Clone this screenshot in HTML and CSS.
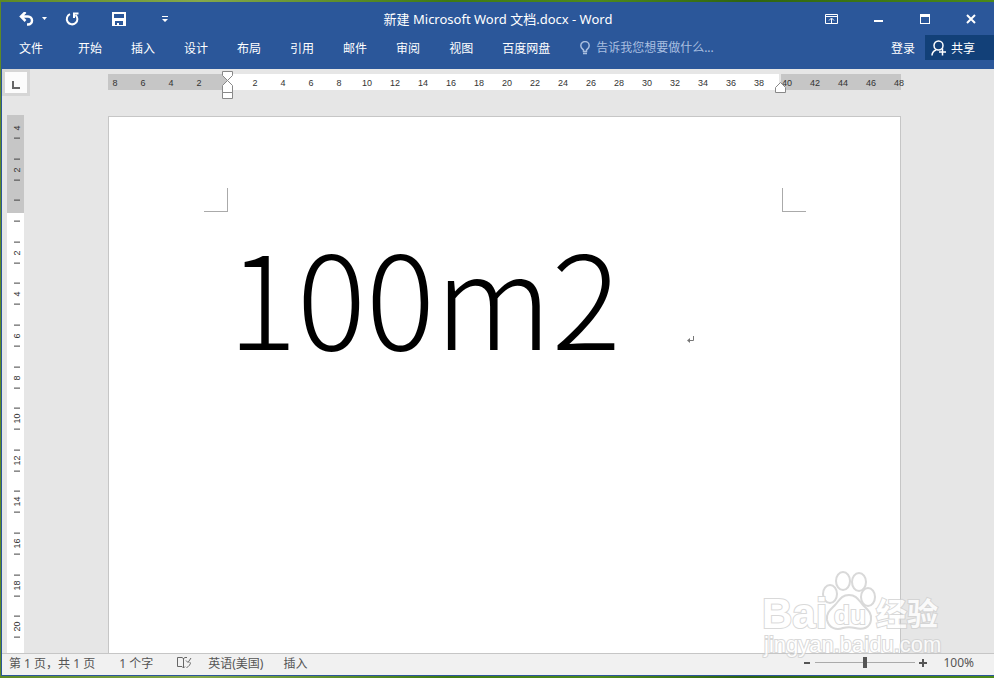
FILE: index.html
```html
<!DOCTYPE html>
<html lang="zh-CN">
<head>
    <meta charset="UTF-8" />
    <title>新建 Microsoft Word 文档.docx - Word</title>
    <link rel="stylesheet" href="styles.css">
</head>
<body>
    <div class="window">
        <header class="ribbon">
            <div class="title-bar">
                <div class="quick-access">
                    <button class="icon-button undo" aria-label="撤消">
                        <svg width="28" height="14" viewBox="0 0 28 14"><path d="M6.500 0 2 4.500 6.500 9M2 4.500h7a4 4 0 0 1 0 8H8" fill="none" stroke="#fff" stroke-width="2.500"/><path d="M23 5h5l-2.500 3z" fill="#fff"/></svg>
                    </button>
                    <button class="icon-button redo" aria-label="重复">
                        <svg width="14" height="14" viewBox="0 0 14 14"><path d="M5 2.200A5.300 5.300 0 1 0 10.500 3" fill="none" stroke="#fff" stroke-width="2"/><path d="M13.500 1.500H9V6" fill="none" stroke="#fff" stroke-width="2"/></svg>
                    </button>
                    <button class="icon-button save" aria-label="保存">
                        <svg width="14" height="14" viewBox="0 0 14 14"><path fill="#fff" fill-rule="evenodd" d="M0 0h14v14H0zM2 2v4h10V2zM3 9v4h2v-2h2v2h4V9z"/></svg>
                    </button>
                    <button class="icon-button" aria-label="自定义快速访问工具栏">
                        <svg width="6" height="6" viewBox="0 0 6 6"><path d="M0 0h6v1H0zM0 3h6L3 6z" fill="#fff"/></svg>
                    </button>
                </div>
                <h1 class="title">新建 Microsoft Word 文档.docx - Word</h1>
                <div class="window-buttons">
                    <button class="icon-button" aria-label="功能区显示选项">
                        <svg width="13" height="10" viewBox="0 0 13 10"><path d="M.5.500h12v9H.5zM1 2.500h11M6.500 9V4.500M4 6.500 6.500 4 9 6.500" fill="none" stroke="#fff"/></svg>
                    </button>
                    <button class="icon-button" aria-label="最小化">
                        <svg width="10" height="12" viewBox="0 0 10 12"><path d="M0 7h9v2H0z" fill="#fff"/></svg>
                    </button>
                    <button class="icon-button" aria-label="最大化">
                        <svg width="10" height="10" viewBox="0 0 10 10"><path fill="#fff" fill-rule="evenodd" d="M0 0h10v10H0zM1 3v6h8V3z"/></svg>
                    </button>
                    <button class="icon-button" aria-label="关闭">
                        <svg width="10" height="10" viewBox="0 0 10 10"><path d="m1 1 8 8M9 1 1 9" stroke="#fff" stroke-width="2"/></svg>
                    </button>
                </div>
            </div>
            <div class="menu-bar">
                <nav class="tabs">
                    <button class="tab file">文件</button>
                    <button class="tab">开始</button>
                    <button class="tab">插入</button>
                    <button class="tab">设计</button>
                    <button class="tab">布局</button>
                    <button class="tab">引用</button>
                    <button class="tab">邮件</button>
                    <button class="tab">审阅</button>
                    <button class="tab">视图</button>
                    <button class="tab">百度网盘</button>
                </nav>
                <label class="tell-me">
                    <svg width="10" height="14" viewBox="0 0 10 14"><path d="M3.500 10.500V9C2.500 8 .8 7 .8 4.800a4.200 4.200 0 0 1 8.400 0C9.200 7 7.500 8 6.500 9v1.500zM3 12.500h4" fill="none" stroke="#a9bfe0" stroke-width="1.500"/></svg>
                    <input type="text" placeholder="告诉我您想要做什么..." aria-label="告诉我您想要做什么">
                </label>
                <button class="sign-in">登录</button>
                <button class="share">
                    <svg width="16" height="16" viewBox="0 0 16 16"><circle cx="7.500" cy="5.500" r="4.500" fill="none" stroke="#fff" stroke-width="1.500"/><path d="M1 15.500c0-3 1.500-4.500 4-5.500M8 12h7M11.500 8.500v7" fill="none" stroke="#fff" stroke-width="1.500"/></svg>
                    共享
                </button>
            </div>
        </header>

        <main class="workspace">
            <button class="tab-stop" aria-label="左对齐式制表符">
                <svg width="8" height="8" viewBox="0 0 8 8"><path d="M1 0v7h7" fill="none" stroke="#666" stroke-width="2"/></svg>
            </button>
            <div class="ruler-row">
                <div class="ruler">
                    <div class="ruler-numbers">
                        <span>8</span><span>6</span><span>4</span><span>2</span><span></span>
                        <span>2</span><span>4</span><span>6</span><span>8</span><span>10</span>
                        <span>12</span><span>14</span><span>16</span><span>18</span><span>20</span>
                        <span>22</span><span>24</span><span>26</span><span>28</span><span>30</span>
                        <span>32</span><span>34</span><span>36</span><span>38</span><span>40</span>
                        <span>42</span><span>44</span><span>46</span><span>48</span>
                    </div>
                    <svg class="indent-left" width="11" height="28" viewBox="0 0 11 28"><path d="M.5.500h10v4l-5 5-5-5zM.5 21.500v-7l5-5 5 5v7zM.5 21.500h10v6H.5z" fill="#fff" stroke="#888"/></svg>
                    <svg class="indent-right" width="11" height="11" viewBox="0 0 11 11"><path d="M.5 10.500v-5l5-5 5 5v5z" fill="#fff" stroke="#888"/></svg>
                </div>
            </div>
            <div class="side-ruler">
                <div class="side-numbers">
                    <span>4</span><span>2</span><span></span><span>2</span><span>4</span>
                    <span>6</span><span>8</span><span>10</span><span>12</span><span>14</span>
                    <span>16</span><span>18</span><span>20</span>
                </div>
            </div>
            <div class="stage">
                <article class="page">
                    <div class="crop-marks"><i class="crop-left"></i><i class="crop-right"></i></div>
                    <p class="paragraph">100m2<svg class="return" width="8" height="8" viewBox="0 0 8 8"><path d="M6.500 0v4.500H2" fill="none" stroke="#777"/><path d="M0 4.500 3 2v5z" fill="#777"/></svg></p>
                </article>
            </div>
        </main>

        <footer class="status-bar">
            <span class="page-count">第 1 页，共 1 页</span>
            <span class="word-count">1 个字</span>
            <button class="proofing" aria-label="校对">
                <svg width="15" height="13" viewBox="0 0 15 13"><path d="M.5 1.500H5l1.500 1 1.500-1h2M.5 1.500v9H5l1.500 1.500v-10M6.500 12 8 10.500M9 4.500l2 2 3-4.500M12.500 6c1.500 1 1 2.500-.5 3.500L9.500 12" fill="none" stroke="#666"/></svg>
            </button>
            <button class="language">英语(美国)</button>
            <button class="insert-mode">插入</button>
            <div class="zoom">
                <button class="zoom-step" aria-label="缩小"><svg width="8" height="8" viewBox="0 0 8 8"><path d="M1 3h6v2H1z" fill="#555"/></svg></button>
                <input class="zoom-range" type="range" min="0" max="200" value="100" aria-label="显示比例">
                <button class="zoom-step" aria-label="放大"><svg width="8" height="8" viewBox="0 0 8 8"><path d="M0 3h3V0h2v3h3v2H5v3H3V5H0z" fill="#555"/></svg></button>
                <button class="zoom-value">100%</button>
            </div>
        </footer>

        <svg class="watermark" width="184" height="88" viewBox="0 0 184 88">
            <g fill="#fff" stroke="#d0d0d0" stroke-width="2" opacity="0.8">
                <ellipse cx="70" cy="23" rx="7" ry="9"/>
                <ellipse cx="83" cy="10" rx="7" ry="9"/>
                <ellipse cx="99" cy="11" rx="7" ry="9"/>
                <ellipse cx="108" cy="26" rx="7" ry="9"/>
                <path d="M89 24c-8 0-10 6-14 10-5 5-9 8-8 15 2 9 10 10 16 8 4-1 8-1 12 0 8 2 15 0 16-8 1-7-3-10-8-15-4-4-6-10-14-10z"/>
                <text class="mark-bai" x="2" y="57">Bai</text>
                <text class="mark-du" x="74" y="53">du</text>
                <text class="mark-cn" x="116" y="54">经验</text>
                <text class="mark-url" x="4" y="81">jingyan.baidu.com</text>
            </g>
        </svg>
    </div>
</body>
</html>
```
FILE: styles.css
```css
* {
    box-sizing: border-box;
}

body {
    margin: 0;
    height: 100vh;
    padding: 2px 0 2px 1px;
    background: linear-gradient(90deg, #5d8a25, #86a94a 20%, #3f7a12 45%, #4f8a1c 60%, #2f6410 75%, #4c8a18);
    font-family: "Noto Sans", "Noto Sans CJK SC", sans-serif;
    font-size: 12px;
    color: #444;
}

button {
    padding: 0;
    border: none;
    background: none;
    color: inherit;
    font: inherit;
}

svg {
    display: block;
}

.window {
    position: relative;
    display: flex;
    flex-direction: column;
    height: 100%;
    border-left: 1px solid #2b579a;
    border-bottom: 1px solid #2b579a;
    background-color: #e6e6e6;
}

/* title bar and tabs */
.ribbon {
    height: 67px;
    background-color: #2b579a;
    color: white;
}

.title-bar {
    display: grid;
    grid-template-columns: 1fr auto 1fr;
    align-items: center;
    height: 33px;
}

.quick-access {
    display: flex;
    align-items: center;
    padding-left: 17px;
}

.undo {
    margin-right: 18px;
}

.redo {
    margin-right: 33px;
}

.save {
    margin-right: 36px;
}

.title {
    margin: 0;
    font-size: 13px;
    font-weight: normal;
}

.window-buttons {
    display: flex;
    align-items: center;
    justify-content: flex-end;
    gap: 36px;
    padding-right: 18px;
}

.menu-bar {
    display: flex;
    align-items: center;
    height: 25px;
}

.tabs {
    display: flex;
    gap: 29px;
    padding-left: 17px;
}

.file {
    margin-right: 6px;
}

.tell-me {
    display: flex;
    align-items: center;
    gap: 6px;
    flex: 1;
    padding-left: 30px;
}

.tell-me input {
    width: 160px;
    padding: 0;
    border: none;
    background: none;
    font: inherit;
    color: white;
}

.tell-me input::placeholder {
    color: #a9bfe0;
}

.sign-in {
    margin-right: 10px;
}

.share {
    display: flex;
    align-items: center;
    gap: 4px;
    width: 69px;
    height: 25px;
    padding-left: 6px;
    background-color: #124078;
}

/* rulers and page */
.workspace {
    display: grid;
    grid-template-columns: 24px 1fr;
    grid-template-rows: 46px 1fr;
    flex: 1;
    min-height: 0;
    overflow: hidden;
}

.tab-stop {
    display: flex;
    align-items: flex-end;
    justify-content: center;
    width: 28px;
    height: 27px;
    padding-bottom: 4px;
    border: 3px solid #d6d6d6;
    background-color: #fcfcfc;
}

.ruler-row {
    display: flex;
    justify-content: center;
    padding: 5px 11px 0 0;
}

.ruler {
    position: relative;
    width: 793px;
    height: 16px;
    background: linear-gradient(90deg, #c6c6c6 120px, white 120px, white 671px, #e6e6e6 671px, #e6e6e6 673px, #c6c6c6 673px);
}

.ruler-numbers {
    display: flex;
    margin-left: -7px;
}

.ruler-numbers span {
    flex: none;
    width: 28px;
    line-height: 18px;
    text-align: center;
}

.ruler-numbers,
.side-numbers {
    font-family: "Liberation Sans", Arial, sans-serif;
    font-size: 9px;
    color: #333;
}

.indent-left,
.indent-right {
    position: absolute;
    left: 114px;
    top: -3px;
}

.indent-right {
    left: 667px;
    top: 8px;
}

.side-ruler {
    width: 17px;
    margin-left: 5px;
    overflow: hidden;
    background: linear-gradient(#c6c6c6 98px, white 98px);
}

.side-numbers {
    display: flex;
    flex-direction: column;
    height: 541px;
    margin-top: -8px;
}

.side-numbers span {
    display: flex;
    flex: 1;
    align-items: center;
    justify-content: space-between;
    padding: 10px 5px 10px 2px;
    writing-mode: vertical-rl;
    transform: rotate(180deg);
}

.side-numbers span::before,
.side-numbers span::after {
    content: "";
    width: 6px;
    height: 1px;
    background-color: #444;
}

.side-numbers span:first-child::after {
    background: none;
}

.stage {
    display: flex;
    justify-content: center;
    padding: 1px 11px 0 0;
}

.page {
    width: 793px;
    padding: 71px 94px 0 95px;
    border: 1px solid #c6c6c6;
    border-bottom: none;
    background-color: white;
}

.crop-marks {
    display: flex;
    justify-content: space-between;
}

.crop-left,
.crop-right {
    width: 24px;
    height: 24px;
    border-bottom: 1px solid #aaa;
}

.crop-left {
    border-right: 1px solid #aaa;
}

.crop-right {
    border-left: 1px solid #aaa;
}

.paragraph {
    display: flex;
    align-items: flex-end;
    gap: 66px;
    margin: 0;
    padding: 2px 0 0 24px;
    font-family: "Noto Sans CJK SC", sans-serif;
    font-size: 129px;
    font-weight: 300;
    line-height: 160px;
    color: black;
}

.return {
    margin-bottom: 30px;
}

/* status bar */
.status-bar {
    display: flex;
    align-items: center;
    height: 22px;
    padding: 0 20px 4px 7px;
    border-top: 1px solid #c6c6c6;
    background-color: #f1f1f1;
    color: #555;
}

.page-count,
.word-count {
    margin-right: 24px;
}

.proofing {
    margin-right: 16px;
}

.language {
    margin-right: 20px;
}

.zoom {
    display: flex;
    align-items: center;
    margin-left: auto;
}

.zoom-range {
    width: 100px;
    height: 12px;
    margin: 0 4px;
    appearance: none;
    background: linear-gradient(#aaa, #aaa) center / 100% 1px no-repeat;
}

.zoom-range::-webkit-slider-thumb {
    width: 4px;
    height: 11px;
    appearance: none;
    background-color: #555;
}

.zoom-value {
    margin-left: 16px;
}

.watermark {
    position: absolute;
    right: 50px;
    bottom: 16px;
    overflow: visible;
}

.watermark text {
    paint-order: stroke;
}

.mark-bai,
.mark-du {
    font-family: "Liberation Sans", Arial, sans-serif;
    font-size: 42px;
    font-weight: bold;
}

.mark-du {
    font-size: 26px;
}

.mark-cn {
    font-family: "Noto Sans CJK SC", sans-serif;
    font-size: 31px;
    font-weight: bold;
}

.mark-url {
    font-family: "Liberation Sans", Arial, sans-serif;
    font-size: 22px;
}
```
